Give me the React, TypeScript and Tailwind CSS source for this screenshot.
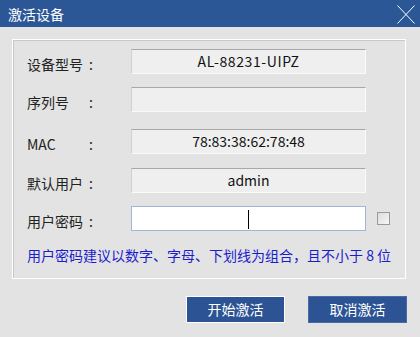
import React from "react";

const font = { fontFamily: '"Noto Sans CJK SC", "Noto Sans", sans-serif' };

function Row({ label, value, mt, white, caret, vcls }: { label: string; value?: string; mt: string; white?: boolean; caret?: boolean; vcls?: string }) {
  return (
    <div className={`flex items-center ${mt}`}>
      <div className="flex w-[104px] shrink-0 items-center text-[14px] text-[#222] leading-none pt-[5px]">
        <span className="w-[62px]">{label}</span>
        <span>:</span>
      </div>
      <div
        className={`relative flex h-[25px] w-[235px] items-center justify-center border text-[14px] text-[#111] ${
          white
            ? "bg-white border-[#9fb6d6]"
            : "bg-[#efefef] border-t-[#a8a8a8] border-l-[#d0d0d0] border-r-[#fafafa] border-b-[#fafafa]"
        }`}
      >
        <span className={vcls}>{value}</span>
        {caret && <div className="absolute left-[116px] top-[3px] h-[19px] w-px bg-black" />}
      </div>
      {white && (
        <div className="ml-[11px] h-[13px] w-[13px] border border-[#9a9a9a] bg-gradient-to-br from-[#dcdcdc] to-[#f6f6f6]" />
      )}
    </div>
  );
}

export default function App() {
  return (
    <div style={font} className="w-[420px] h-[337px] bg-[#e3e3e3] overflow-hidden">
      <div className="flex h-[27px] items-center justify-between bg-[#2b5797] pl-[8px] pr-[5px]">
        <span className="text-[14px] text-white leading-none pt-[1px]">激活设备</span>
        <svg width="18" height="19" viewBox="0 0 18 19" className="mt-[1px]">
          <path d="M0.5 0.5 L17.5 18.5 M17.5 0.5 L0.5 18.5" stroke="white" strokeWidth="1" fill="none" />
        </svg>
      </div>
      <div className="px-[12px] pt-[12px]">
        <div className="h-[240px] w-[394px] border border-white pt-[9px] pl-[14px] shadow-[inset_1px_1px_0_#c8c8c8]">
          <Row label="设备型号" value="AL-88231-UIPZ" mt="" vcls="tracking-[0.6px]" />
          <Row label="序列号" value="" mt="mt-[13px]" />
          <Row label="MAC" value="78:83:38:62:78:48" mt="mt-[17px]" />
          <Row label="默认用户" value="admin" mt="mt-[14px]" />
          <Row label="用户密码" value="" mt="mt-[13px]" white caret />
          <div className="mt-[17px] text-[14px] leading-none text-[#1c1ccf]">
            用户密码建议以数字、字母、下划线为组合，且不小于 8 位
          </div>
        </div>
      </div>
      <div className="mt-[17px] flex justify-end gap-[23px] pr-[13px]">
        <button className="h-[27px] w-[99px] border border-white bg-[#2c5394] text-[14px] text-white">开始激活</button>
        <button className="h-[27px] w-[99px] border border-[#4a6aa5] bg-[#2c5394] text-[14px] text-white">取消激活</button>
      </div>
    </div>
  );
}
